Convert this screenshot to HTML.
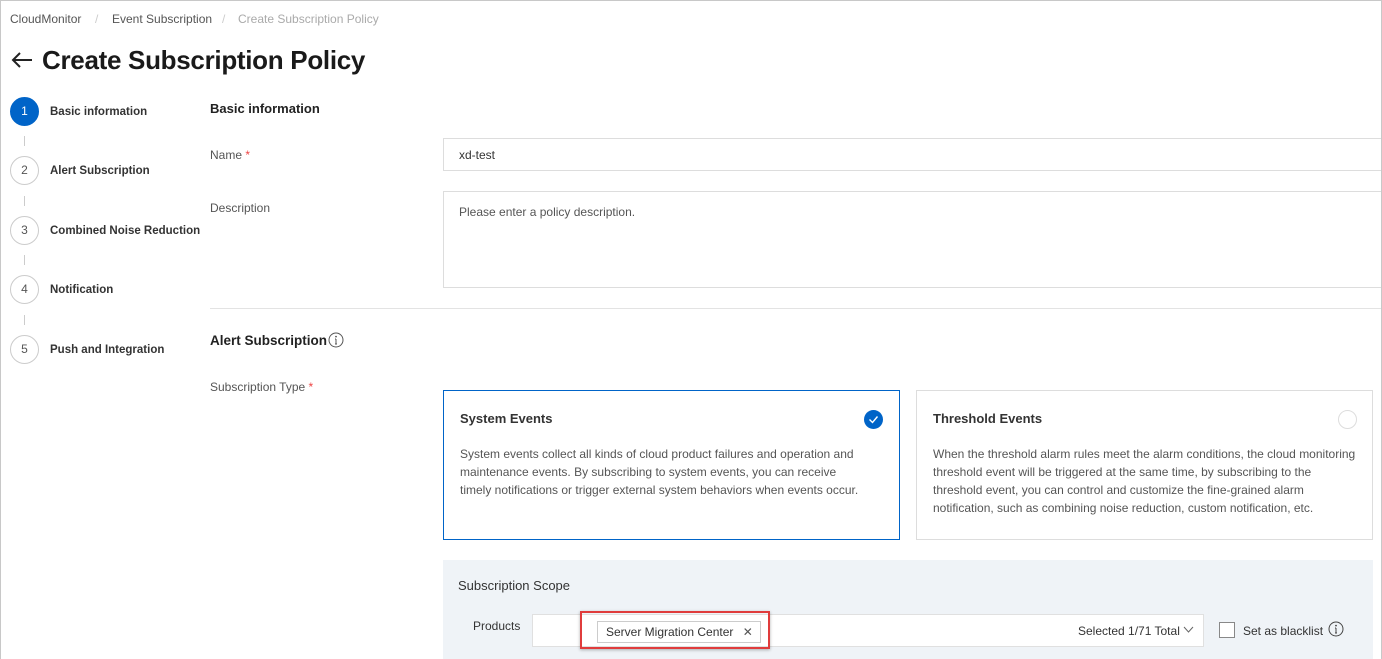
<!DOCTYPE html>
<html><head><meta charset="utf-8"><style>
*{box-sizing:border-box;margin:0;padding:0}
body{width:1382px;height:659px;overflow:hidden;background:#fff;font-family:"Liberation Sans",sans-serif;color:#333;position:relative}
.frame{position:absolute;left:0;top:0;width:1382px;height:659px;border:1px solid #c8c8c8;border-bottom:none}
.a{position:absolute;white-space:nowrap}
.crumb{top:12px;font-size:12px;color:#555}
.step{position:absolute;left:10px;width:29px;height:29px;border-radius:50%;border:1px solid #ccc;color:#555;font-size:12px;text-align:center;line-height:27px;background:#fff}
.sl{position:absolute;left:50px;font-size:11.5px;font-weight:bold;color:#333}
.vl{position:absolute;left:24px;width:1px;height:10px;background:#ccc}
.lbl{font-size:12px;color:#555}
.req{color:#e44}
.box{position:absolute;border:1px solid #ddd;background:#fff}
.card p{font-size:12px;line-height:18px;color:#555;position:absolute;left:16px;white-space:normal}
.card h4{position:absolute;left:16px;top:20px;font-size:13px;font-weight:bold;color:#333}
</style></head><body>
<div class="a crumb" style="left:10px">CloudMonitor</div>
<div class="a crumb" style="left:95px;color:#ccc">/</div>
<div class="a crumb" style="left:112px">Event Subscription</div>
<div class="a crumb" style="left:222px;color:#ccc">/</div>
<div class="a crumb" style="left:238px;color:#aaa">Create Subscription Policy</div>
<svg class="a" style="left:10px;top:51px" width="24" height="18" viewBox="0 0 24 18"><path d="M22 9H3M10 2L3 9l7 7" stroke="#222" stroke-width="2" fill="none"/></svg>
<div class="a" style="left:42px;top:45px;font-size:26px;font-weight:bold;color:#1a1a1a;letter-spacing:-0.3px">Create Subscription Policy</div>

<div class="step" style="top:97px;background:#0064c8;border-color:#0064c8;color:#fff">1</div>
<div class="sl" style="top:106px">Basic information</div>
<div class="vl" style="top:136px"></div>
<div class="step" style="top:156px">2</div>
<div class="sl" style="top:165px">Alert Subscription</div>
<div class="vl" style="top:196px"></div>
<div class="step" style="top:216px">3</div>
<div class="sl" style="top:225px">Combined Noise Reduction</div>
<div class="vl" style="top:255px"></div>
<div class="step" style="top:275px">4</div>
<div class="sl" style="top:284px">Notification</div>
<div class="vl" style="top:315px"></div>
<div class="step" style="top:335px">5</div>
<div class="sl" style="top:344px">Push and Integration</div>

<div class="a" style="left:210px;top:101px;font-size:13px;font-weight:bold;color:#222">Basic information</div>
<div class="a lbl" style="left:210px;top:148px">Name <span class="req">*</span></div>
<div class="box" style="left:443px;top:138px;width:945px;height:33px"></div>
<div class="a" style="left:459px;top:148px;font-size:12px;color:#333">xd-test</div>
<div class="a lbl" style="left:210px;top:201px">Description</div>
<div class="box" style="left:443px;top:191px;width:945px;height:97px"></div>
<div class="a" style="left:459px;top:205px;font-size:12px;color:#555">Please enter a policy description.</div>
<div class="a" style="left:210px;top:308px;width:1172px;height:1px;background:#e3e3e3"></div>
<div class="a" style="left:210px;top:333px;font-size:13.5px;font-weight:bold;color:#222">Alert Subscription</div>
<svg class="a" style="left:328px;top:332px" width="16" height="16"><circle cx="8" cy="8" r="7" fill="none" stroke="#555"/><path d="M8 7v5M7 12h2M7 7h1" stroke="#555"/><circle cx="8" cy="4.6" r=".9" fill="#555"/></svg>
<div class="a lbl" style="left:210px;top:380px">Subscription Type <span class="req">*</span></div>

<div class="box card" style="left:443px;top:390px;width:457px;height:150px;border-color:#0064c8">
<h4>System Events</h4>
<svg style="position:absolute;left:420px;top:19px" width="19" height="19"><circle cx="9.5" cy="9.5" r="9.5" fill="#0064c8"/><path d="M5.5 9.5l3 3 5-6" stroke="#fff" stroke-width="1.4" fill="none"/></svg>
<p style="top:54px;width:405px">System events collect all kinds of cloud product failures and operation and maintenance events. By subscribing to system events, you can receive timely notifications or trigger external system behaviors when events occur.</p>
</div>
<div class="box card" style="left:916px;top:390px;width:457px;height:150px">
<h4>Threshold Events</h4>
<svg style="position:absolute;left:421px;top:19px" width="19" height="19"><circle cx="9.5" cy="9.5" r="9" fill="#fff" stroke="#ddd"/></svg>
<p style="top:54px;width:430px">When the threshold alarm rules meet the alarm conditions, the cloud monitoring threshold event will be triggered at the same time, by subscribing to the threshold event, you can control and customize the fine-grained alarm notification, such as combining noise reduction, custom notification, etc.</p>
</div>

<div class="a" style="left:443px;top:560px;width:930px;height:99px;background:#eff3f7"></div>
<div class="a" style="left:458px;top:578px;font-size:13px;color:#333">Subscription Scope</div>
<div class="a lbl" style="left:473px;top:619px;color:#333">Products</div>
<div class="box" style="left:532px;top:614px;width:672px;height:33px;border-color:#e0e0e0"></div>
<div class="a" style="left:580px;top:611px;width:190px;height:38px;border:2px solid #e03c3c;box-shadow:0 1px 3px rgba(0,0,0,.3)"></div>
<div class="a" style="left:597px;top:621px;width:164px;height:22px;border:1px solid #ccc;background:#fff;font-size:12px;line-height:20px;padding-left:8px;color:#333">Server Migration Center <span style="margin-left:6px;color:#555">✕</span></div>
<div class="a" style="left:1078px;top:624px;font-size:12px;color:#333">Selected 1/71 Total</div>
<svg class="a" style="left:1183px;top:626px" width="11" height="8"><path d="M1 1l4.5 5L10 1" stroke="#666" fill="none"/></svg>
<div class="a" style="left:1219px;top:622px;width:16px;height:16px;border:1px solid #888;background:#fff"></div>
<div class="a" style="left:1243px;top:624px;font-size:12px;color:#333">Set as blacklist</div>
<svg class="a" style="left:1328px;top:621px" width="16" height="16"><circle cx="8" cy="8" r="7" fill="none" stroke="#444"/><path d="M8 7v5M7 12h2M7 7h1" stroke="#444"/><circle cx="8" cy="4.6" r=".9" fill="#444"/></svg>
<div class="frame"></div>
</body></html>
